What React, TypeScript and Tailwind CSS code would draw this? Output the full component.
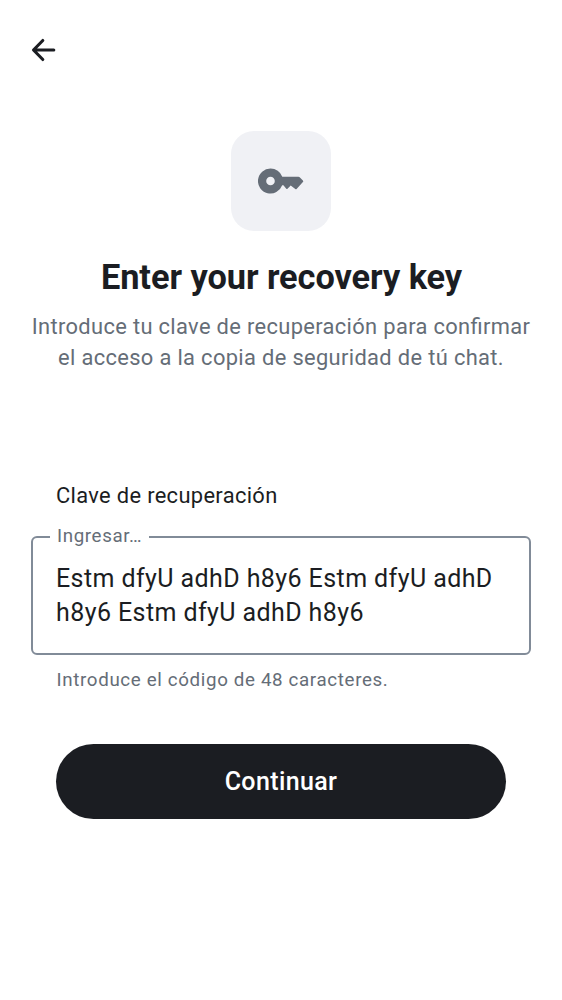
import React from "react";

export default function App() {
  return (
    <main className="flex h-[1000px] w-[562px] flex-col bg-white px-[31px] pt-[35px] font-['Roboto',sans-serif] text-[#1b1d22]">
      <button aria-label="Volver" className="-ml-[6px] h-[30px] w-[37px]">
        <svg viewBox="0 0 37 30" className="h-[30px] w-[37px]" fill="none" stroke="currentColor" strokeWidth="3.1" strokeLinecap="round" strokeLinejoin="round">
          <path d="M28.800 15H9M17.800 5.500L8.500 15L17.800 24.500" />
        </svg>
      </button>
      <header className="flex flex-col items-center pt-[66px] text-center">
        <div className="flex h-[100px] w-[100px] items-center justify-center rounded-[23px] bg-[#f0f1f5]">
          <svg viewBox="0 0 46 26" className="h-[26px] w-[46px]" fill="#656d77">
            <path fillRule="evenodd" d="M12.500 .5a12.500 12.500 0 1 0 11.700 16.800H25.400L28.300 20.700Q28.900 21.300 29.500 20.700L32.700 17.500L37.300 21Q38 21.500 38.600 20.900L44.900 14Q45.600 13.200 44.900 12.400L41.700 9.200Q41.200 8.700 40.500 8.700H24.300A12.500 12.500 0 0 0 12.500 .5zm0 8.200a4.300 4.300 0 1 1 0 8.600 4.300 4.300 0 0 1 0-8.600z" />
          </svg>
        </div>
        <h1 className="mt-[24px] whitespace-nowrap pl-px text-[34.35px] font-bold leading-[44px] tracking-[-0.05px]">Enter your recovery key</h1>
        <p className="mt-[12px] whitespace-nowrap text-[21.86px] leading-[31px] tracking-[0.35px] text-[#656d77] [font-feature-settings:'liga'_1]">
          Introduce tu clave de recuperación para confirmar<br />el acceso a la copia de seguridad de tú chat.
        </p>
      </header>
      <section className="mt-[107px] flex flex-col">
        <label htmlFor="key" className="ml-[25px] text-[21.86px] leading-[32px] tracking-[0.34px]">Clave de recuperación</label>
        <fieldset className="mt-[12px] h-[131px] rounded-[6px] border-2 border-[#818b98] px-[23px]">
          <legend className="-ml-[6px] pb-[2px] pl-[7px] pr-[7px] text-[18.74px] leading-[24px] tracking-[0.62px] text-[#656d77]">Ingresar…</legend>
          <p id="key" className="mt-[12px] whitespace-nowrap text-[25px] leading-[34px] tracking-[0.41px]">
            Estm dfyU adhD h8y6 Estm dfyU adhD<br />h8y6 Estm dfyU adhD h8y6
          </p>
        </fieldset>
        <p className="ml-[25.5px] mt-[12px] text-[18.74px] leading-[26px] tracking-[0.65px] text-[#656d77]">Introduce el código de 48 caracteres.</p>
      </section>
      <button className="mx-[25px] mt-[51px] h-[75px] rounded-full bg-[#1b1d22] text-[25px] font-medium tracking-[0.38px] text-white">Continuar</button>
    </main>
  );
}
